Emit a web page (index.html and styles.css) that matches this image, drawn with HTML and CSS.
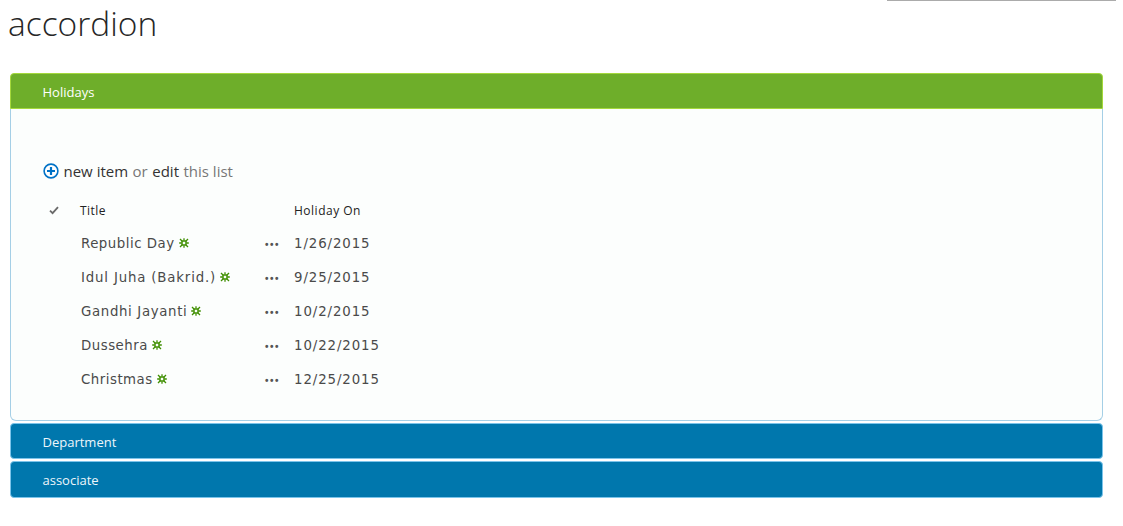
FILE: index.html
```html
<!DOCTYPE html>
<html lang="en">
<head>
<meta charset="utf-8">
<title>accordion</title>
<link rel="stylesheet" href="styles.css">
</head>
<body>
<div class="topline"></div>
<h1 class="title">accordion</h1>
<div class="accordion">
  <div class="acc-head acc-head-active">Holidays</div>
  <div class="acc-body">
    <div class="actions">
      <svg class="plus" width="16" height="16" viewBox="0 0 16 16"><circle cx="8" cy="8" r="6.9" fill="#fff" stroke="#0072c6" stroke-width="1.6"/><path d="M8 4v8M4 8h8" stroke="#0072c6" stroke-width="2.2" fill="none"/></svg>
      <span class="dark">new item</span> <span class="grey">or</span> <span class="dark">edit</span> <span class="grey">this list</span>
    </div>
    <div class="table">
      <div class="row head">
        <div class="c-check"><svg width="10" height="9" viewBox="0 0 10 9"><path d="M1 4.6 3.6 7.2 9 1.2" fill="none" stroke="#6a6a6a" stroke-width="1.8"/></svg></div>
        <div class="c-title">Title</div>
        <div class="c-menu"></div>
        <div class="c-date">Holiday On</div>
      </div>
      <div class="row item"><div class="c-check"></div><div class="c-title"><span class="name">Republic Day</span><svg class="new" viewBox="0 0 10 10"><use href="#star"/></svg></div><div class="c-menu">•••</div><div class="c-date">1/26/2015</div></div>
      <div class="row item"><div class="c-check"></div><div class="c-title"><span class="name name-wide">Idul Juha (Bakrid.)</span><svg class="new" viewBox="0 0 10 10"><use href="#star"/></svg></div><div class="c-menu">•••</div><div class="c-date">9/25/2015</div></div>
      <div class="row item"><div class="c-check"></div><div class="c-title"><span class="name name-mid">Gandhi Jayanti</span><svg class="new" viewBox="0 0 10 10"><use href="#star"/></svg></div><div class="c-menu">•••</div><div class="c-date">10/2/2015</div></div>
      <div class="row item"><div class="c-check"></div><div class="c-title"><span class="name">Dussehra</span><svg class="new" viewBox="0 0 10 10"><use href="#star"/></svg></div><div class="c-menu">•••</div><div class="c-date">10/22/2015</div></div>
      <div class="row item"><div class="c-check"></div><div class="c-title"><span class="name">Christmas</span><svg class="new" viewBox="0 0 10 10"><use href="#star"/></svg></div><div class="c-menu">•••</div><div class="c-date">12/25/2015</div></div>
    </div>
  </div>
  <div class="acc-head acc-dept">Department</div>
  <div class="acc-head acc-assoc">associate</div>
</div>
<svg class="defs" width="0" height="0"><defs><g id="star"><path d="M3 3h4v4H3z" fill="none" stroke="#3f8f00" stroke-width="1.5"/><path d="M5 .2v2.4M5 7.4v2.4M.2 5h2.4M7.4 5h2.4M1 1l2 2M9 1 7 3M1 9l2-2M9 9 7 7" stroke="#3f8f00" stroke-width="1.3" fill="none"/></g></defs></svg>
</body>
</html>
```
FILE: styles.css
```css
html, body { margin: 0; padding: 0; background: #fff; }
body { font-family: "Open Sans", "Liberation Sans", sans-serif; height: 526px; overflow: hidden; }
.topline { height: 1px; width: 229px; margin-left: 887px; background: #ababab; }
.title { margin: 0 0 0 8px; font-weight: 300; font-size: 33.5px; line-height: 45px; height: 72px; color: #262626; }
.accordion { margin-left: 10px; width: 1093px; }
.acc-head { box-sizing: border-box; height: 36px; padding-left: 31.5px; font-size: 13px; line-height: 36px; color: #eef6fb; background: #0077ad; border: 1px solid #7cc4ea; border-radius: 4px; }
.acc-head-active { background: #6eae2a; border-color: #a4d83c; border-radius: 4px 4px 0 0; color: #fff; }
.acc-dept { margin-top: 2px; }
.acc-assoc { margin-top: 2px; height: 37px; }
.acc-body { box-sizing: border-box; height: 312px; background: #fcfefd; border: 1px solid #a5cfe6; border-top: 0; border-radius: 0 0 6px 6px; padding: 51px 0 0 32px; }
.actions { display: flex; align-items: center; height: 22px; font-size: 15px; color: #444; white-space: pre-wrap; gap: 4.5px; }
.dark { color: #333; }
.grey { color: #777; }
.table { margin-top: 17px; }
.row { display: flex; align-items: center; }
.head { height: 22px; font-size: 12px; letter-spacing: .45px; color: #222; margin-bottom: 5px; }
.item { height: 34px; font-family: "DejaVu Sans", Verdana, sans-serif; font-size: 13.33px; color: #4a4a4a; }
.c-check { width: 37px; display: flex; padding-left: 6px; box-sizing: border-box; }
.c-title { width: 184px; display: flex; align-items: center; }
.item .c-title { padding-left: 1px; box-sizing: border-box; }
.name { letter-spacing: .5px; }
.name-wide { letter-spacing: .83px; }
.name-mid { letter-spacing: .65px; }
.c-date { letter-spacing: .9px; }
.head .c-date { letter-spacing: .5px; }
.c-menu { box-sizing: border-box; width: 30px; padding: 2px 0 0 1px; font-size: 10px; font-weight: 700; letter-spacing: 1.5px; color: #555; font-family: "Liberation Sans", sans-serif; }
.new { width: 10px; height: 10px; margin-left: 4px; }
.defs { position: absolute; }
```
